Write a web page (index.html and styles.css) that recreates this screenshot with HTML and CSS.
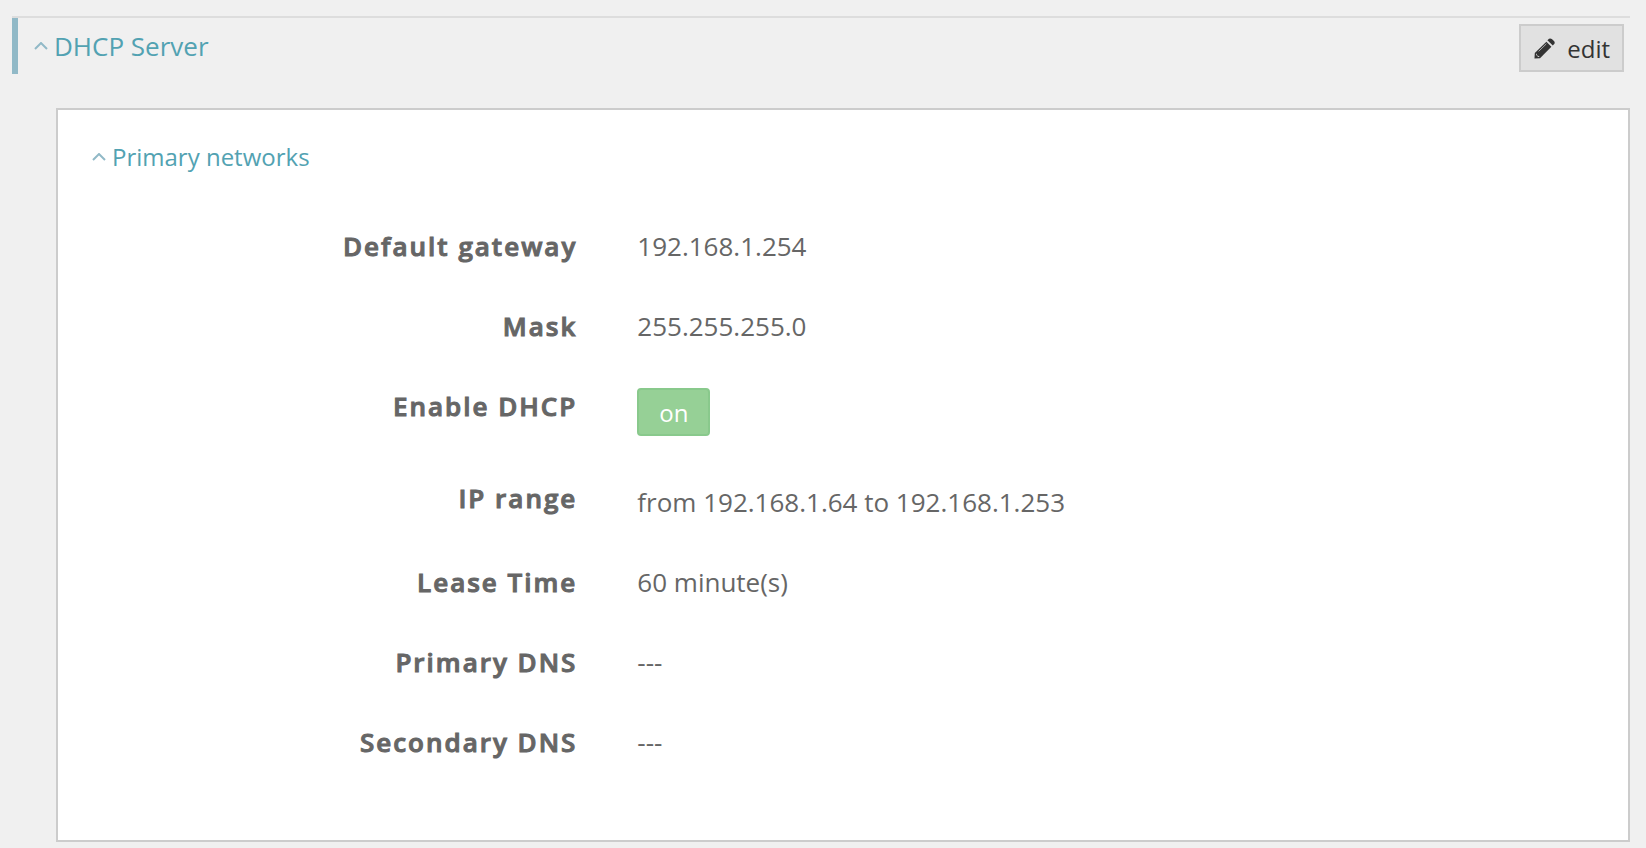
FILE: index.html
```html
<!DOCTYPE html>
<html lang="en">
<head>
  <meta charset="UTF-8">
  <meta name="viewport" content="width=device-width, initial-scale=1">
  <title>DHCP Server</title>
  <link rel="stylesheet" href="styles.css">
</head>
<body>
  <section class="section">
    <header class="section-header">
      <h2 class="section-title">
        <a href="#dhcp" class="toggle">
          <svg class="chevron" width="14" height="8" viewBox="0 0 14 8" aria-hidden="true"><path d="M1 7l6-6 6 6"/></svg>
          <span>DHCP Server</span>
        </a>
      </h2>
      <button type="button" class="btn-edit">
        <svg class="pencil" width="21" height="21" viewBox="0 0 21 21" aria-hidden="true">
          <path class="pencil-body" d="M12.4 3.8L17.4 8.8 6 20.2 0.5 20.5 0.8 15z"/>
          <path class="pencil-body" d="M13.4 2.2L15 0.8Q16.4 0 17.8 1L20.2 3.3Q21.2 4.6 20.2 6L18.8 7.6z"/>
          <path class="pencil-line" d="M4.6 13.4L12.4 5.8"/>
          <path class="pencil-tip" d="M2.4 15.2L3.2 17.6 5.8 18.4 4.2 19 2 16.8z"/>
        </svg>
        <span>edit</span>
      </button>
    </header>

    <div class="panel" id="dhcp">
      <h3 class="panel-title">
        <a href="#primary" class="toggle">
          <svg class="chevron" width="14" height="8" viewBox="0 0 14 8" aria-hidden="true"><path d="M1 7l6-6 6 6"/></svg>
          <span>Primary networks</span>
        </a>
      </h3>
      <dl class="fields" id="primary">
        <div class="field">
          <dt>Default gateway</dt>
          <dd>192.168.1.254</dd>
        </div>
        <div class="field">
          <dt>Mask</dt>
          <dd>255.255.255.0</dd>
        </div>
        <div class="field">
          <dt id="enable-label">Enable DHCP</dt>
          <dd><button type="button" class="btn-on" aria-describedby="enable-label">on</button></dd>
        </div>
        <div class="field field-range">
          <dt>IP range</dt>
          <dd>from 192.168.1.64 to 192.168.1.253</dd>
        </div>
        <div class="field">
          <dt>Lease Time</dt>
          <dd>60 minute(s)</dd>
        </div>
        <div class="field">
          <dt>Primary DNS</dt>
          <dd>---</dd>
        </div>
        <div class="field">
          <dt>Secondary DNS</dt>
          <dd>---</dd>
        </div>
      </dl>
    </div>
  </section>
</body>
</html>
```
FILE: styles.css
```css
/*reset*/
* {
  box-sizing: border-box;
}

body, h2, h3, dl, dt, dd, button {
  margin: 0;
  padding: 0;
}

h2, h3 {
  font-weight: normal;
  line-height: 38px;
}

a {
  color: inherit;
  text-decoration: none;
}

button {
  font-family: inherit;
  font-size: 24px;
  line-height: 32px;
  cursor: pointer;
}

body {
  background: #f0f0f0;
  color: #666;
  font-family: "Open Sans", "Noto Sans", sans-serif;
  font-size: 26px;
  line-height: 36px;
}

/*section header*/
.section {
  padding: 16px 16px 6px 12px;
}

.section-header {
  display: flex;
  justify-content: space-between;
  align-items: flex-start;
  border-top: 2px solid #ddd;
}

.section-title {
  padding: 9px 16px;
  border-left: 6px solid #91b9c7;
  font-size: 26px;
}

.toggle {
  display: flex;
  align-items: center;
  gap: 6px;
  color: #52a2b2;
}

.chevron {
  fill: none;
  stroke: #91b9c7;
  stroke-width: 2;
}

.btn-edit {
  display: flex;
  align-items: center;
  gap: 12px;
  height: 48px;
  margin: 6px 6px 0 0;
  padding: 2px 12px 0 13px;
  border: 2px solid #ccc;
  background: #e1e1e1;
  color: #333;
}

.pencil {
  margin-bottom: 2px;
}

.pencil-body {
  fill: #333;
}

.pencil-line {
  stroke: #aaa;
  stroke-width: 1;
}

.pencil-tip {
  fill: #e1e1e1;
}

/*panel*/
.panel {
  margin: 34px 0 0 44px;
  padding: 28px 0 80px;
  border: 2px solid #ccc;
  background: #fff;
}

.panel-title {
  padding: 0 34px;
  font-size: 24px;
}

.fields {
  display: flex;
  flex-direction: column;
  gap: 44px;
  margin-top: 52px;
}

.field {
  display: grid;
  grid-template-columns: 1fr 2fr;
}

.field dt {
  padding-right: 4px;
  font-weight: 600;
  letter-spacing: 2px;
  text-align: right;
  -webkit-text-stroke: 1px #666;
}

.field dd {
  padding-left: 56px;
}

.field-range dd {
  padding-top: 4px;
}

.btn-on {
  display: block;
  height: 48px;
  padding: 2px 20px 0;
  border: 2px solid #89c98c;
  border-radius: 4px;
  background: #96d096;
  color: #fff;
}
```
